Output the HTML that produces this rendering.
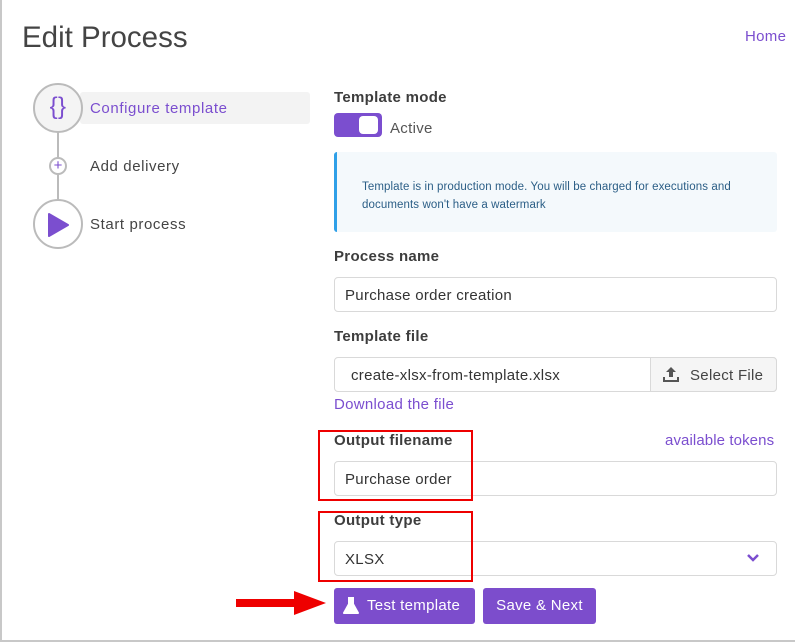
<!DOCTYPE html>
<html><head><style>
*{box-sizing:border-box;margin:0;padding:0}
body{width:795px;height:643px;background:#fff;font-family:"Liberation Sans",sans-serif;color:#444;position:relative;overflow:hidden;letter-spacing:0.3px}
.frame{position:absolute;left:0;top:0;width:795px;height:642px;border-left:2px solid #c8c8c8;border-bottom:2px solid #c8c8c8}
.a{position:absolute}
.lbl{position:absolute;left:334px;font-size:15px;font-weight:bold;color:#3d3d3d;letter-spacing:0.3px}
.inp{position:absolute;left:334px;width:443px;height:35px;border:1px solid #d9d9d9;border-radius:4px;font-size:15px;color:#333;padding:9px 10px}
.p{color:#7b4ecf}
.btn{position:absolute;top:588px;height:36px;background:#7c4dcc;color:#fff;border-radius:3px;font-size:15px;line-height:36px}
</style></head><body>
<div class="frame"></div>
<div class="a" style="left:22px;top:21px;font-size:29.5px;color:#444;letter-spacing:0">Edit Process</div>
<div class="a p" style="left:745px;top:28px;font-size:15px">Home</div>

<div class="a" style="left:80px;top:92px;width:230px;height:32px;background:#f3f3f3;border-radius:3px"></div>
<div class="a" style="left:57px;top:120px;width:2px;height:90px;background:#bbb"></div>
<div class="a" style="left:33px;top:83px;width:50px;height:50px;border:2px solid #bbb;border-radius:50%;background:#f4f4f4;color:#7b4ecf;font-size:24px;text-align:center;line-height:44px">{}</div>
<div class="a" style="left:49px;top:157px;width:18px;height:18px;border:2px solid #bbb;border-radius:50%;background:#fff;color:#7b4ecf;font-size:15px;text-align:center;line-height:13px;letter-spacing:0">+</div>
<div class="a" style="left:33px;top:199px;width:50px;height:50px;border:2px solid #bbb;border-radius:50%;background:#fff"></div>
<svg class="a" style="left:48px;top:213px" width="22" height="24"><path d="M1 1 L20 12 L1 23 Z" fill="#7b4ecf" stroke="#7b4ecf" stroke-linejoin="round" stroke-width="2"/></svg>
<div class="a p" style="left:90px;top:100px;font-size:15px;letter-spacing:0.6px">Configure template</div>
<div class="a" style="left:90px;top:158px;font-size:15px;letter-spacing:0.6px">Add delivery</div>
<div class="a" style="left:90px;top:216px;font-size:15px;letter-spacing:0.6px">Start process</div>

<div class="lbl" style="top:89px">Template mode</div>
<div class="a" style="left:334px;top:113px;width:48px;height:24px;background:#7b4ecf;border-radius:4px"></div>
<div class="a" style="left:359px;top:116px;width:19px;height:18px;background:#fff;border-radius:4px"></div>
<div class="a" style="left:390px;top:120px;font-size:15px;color:#555">Active</div>
<div class="a" style="left:334px;top:152px;width:443px;height:80px;background:#f4f9fc;border-left:3px solid #2fa0e8;border-radius:3px;font-size:11.5px;color:#2b5e86;padding:26px 0 0 25px;line-height:18px;letter-spacing:0.1px">Template is in production mode. You will be charged for executions and<br>documents won't have a watermark</div>

<div class="lbl" style="top:248px">Process name</div>
<div class="inp" style="top:277px">Purchase order creation</div>
<div class="lbl" style="top:328px">Template file</div>
<div class="inp" style="top:357px;padding-left:16px">create-xlsx-from-template.xlsx</div>
<div class="a" style="left:650px;top:357px;width:127px;height:35px;background:#f5f5f5;border:1px solid #d9d9d9;border-radius:0 4px 4px 0;font-size:15px;color:#444;padding:9px 0 0 39px">Select File</div>
<svg class="a" style="left:663px;top:366px" width="16" height="16"><path d="M8 1 L3 6 H6 V11 H10 V6 H13 Z" fill="#555"/><path d="M1 11 V15 H15 V11" stroke="#555" stroke-width="2" fill="none"/></svg>
<div class="a p" style="left:334px;top:396px;font-size:15px">Download the file</div>

<div class="lbl" style="top:432px">Output filename</div>
<div class="a p" style="left:665px;top:432px;font-size:15px;letter-spacing:0.1px">available tokens</div>
<div class="inp" style="top:461px">Purchase order</div>
<div class="a" style="left:318px;top:430px;width:155px;height:71px;border:2px solid #e00"></div>

<div class="lbl" style="top:512px">Output type</div>
<div class="inp" style="top:541px">XLSX</div>
<svg class="a" style="left:746px;top:553px" width="14" height="10"><path d="M2 2 L7 7 L12 2" stroke="#7b4ecf" stroke-width="2.5" fill="none"/></svg>
<div class="a" style="left:318px;top:511px;width:155px;height:71px;border:2px solid #e00"></div>

<div class="btn" style="left:334px;width:141px;padding-left:33px">Test template</div>
<svg class="a" style="left:343px;top:597px" width="16" height="18"><path d="M5 1 H11 M6 1 V7 L1 16 H15 L10 7 V1" fill="#fff" stroke="#fff" stroke-width="2" stroke-linejoin="round"/></svg>
<div class="btn" style="left:483px;width:113px;text-align:center">Save &amp; Next</div>

<svg class="a" style="left:234px;top:588px" width="94" height="30"><path d="M2 11 H60 V3 L92 15 L60 27 V19 H2 Z" fill="#e00"/></svg>
</body></html>
